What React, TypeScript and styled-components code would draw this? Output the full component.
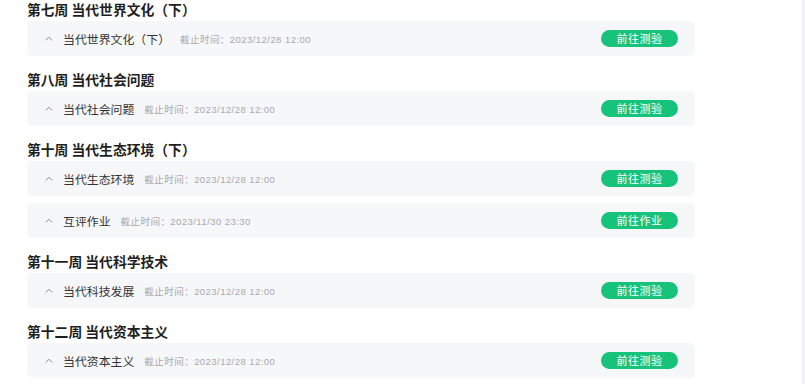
import * as React from "react";
import styled, { createGlobalStyle } from "styled-components";

const GlobalStyle = createGlobalStyle`
  html, body {
    margin: 0;
    padding: 0;
    background: #fff;
    font-family: "Noto Sans CJK SC", "Noto Sans", "Liberation Sans", sans-serif;
  }
`;

const Page = styled.div`
  display: flex;
  flex-direction: row;
  width: 805px;
  height: 384px;
  overflow: hidden;
`;

const Main = styled.div`
  flex: 1;
  padding-left: 27px;
`;

const Track = styled.div`
  width: 3px;
  background: #f1f1f3;
`;

const Section = styled.div`
  width: 668px;
  margin-bottom: 14px;
`;

const Heading = styled.div`
  height: 18px;
  line-height: 18px;
  margin-bottom: 3px;
  font-size: 13.8px;
  font-weight: 700;
  color: #1f1f1f;
  white-space: nowrap;
`;

const List = styled.div`
  display: flex;
  flex-direction: column;
  gap: 7px;
`;

const Card = styled.div`
  display: flex;
  align-items: center;
  height: 35px;
  padding: 0 17px 0 18px;
  border-radius: 5px;
  background: #f6f7f9;
`;

const Chevron = styled.svg`
  width: 8px;
  height: 5px;
  margin-right: 10px;
  flex-shrink: 0;
`;

const Title = styled.span`
  font-size: 11.9px;
  color: #333;
  white-space: nowrap;
`;

const Deadline = styled.span`
  margin-left: 10px;
  font-family: "Liberation Sans", "Noto Sans CJK SC", sans-serif;
  font-size: 9.5px;
  letter-spacing: 0.45px;
  color: #a9a9ad;
  white-space: nowrap;
`;

const GoButton = styled.button`
  margin-left: auto;
  width: 77px;
  height: 17px;
  padding: 0;
  border: none;
  border-radius: 9px;
  background: #17c37b;
  color: #fff;
  font-family: inherit;
  font-size: 11px;
  line-height: 17px;
  letter-spacing: 0.5px;
  cursor: pointer;
`;

interface ITask {
  title: string;
  deadline: string;
  action: string;
}

interface IWeek {
  heading: string;
  tasks: ITask[];
}

const weeks: IWeek[] = [
  {
    heading: "第七周 当代世界文化（下）",
    tasks: [{ title: "当代世界文化（下）", deadline: "2023/12/28 12:00", action: "前往测验" }]
  },
  {
    heading: "第八周 当代社会问题",
    tasks: [{ title: "当代社会问题", deadline: "2023/12/28 12:00", action: "前往测验" }]
  },
  {
    heading: "第十周 当代生态环境（下）",
    tasks: [
      { title: "当代生态环境", deadline: "2023/12/28 12:00", action: "前往测验" },
      { title: "互评作业", deadline: "2023/11/30 23:30", action: "前往作业" }
    ]
  },
  {
    heading: "第十一周 当代科学技术",
    tasks: [{ title: "当代科技发展", deadline: "2023/12/28 12:00", action: "前往测验" }]
  },
  {
    heading: "第十二周 当代资本主义",
    tasks: [{ title: "当代资本主义", deadline: "2023/12/28 12:00", action: "前往测验" }]
  }
];

function TaskRow({ title, deadline, action }: ITask) {
  return (
    <Card>
      <Chevron viewBox="0 0 8 5">
        <polyline points="0.8,4.4 4,1.2 7.2,4.4" fill="none" stroke="#8a8a8f" strokeWidth="1" />
      </Chevron>
      <Title>{title}</Title>
      <Deadline>截止时间：{deadline}</Deadline>
      <GoButton>{action}</GoButton>
    </Card>
  );
}

export default function App() {
  return (
    <Page>
      <GlobalStyle />
      <Main>
        {weeks.map(week => (
          <Section key={week.heading}>
            <Heading>{week.heading}</Heading>
            <List>
              {week.tasks.map(task => (
                <TaskRow key={task.title} {...task} />
              ))}
            </List>
          </Section>
        ))}
      </Main>
      <Track />
    </Page>
  );
}
